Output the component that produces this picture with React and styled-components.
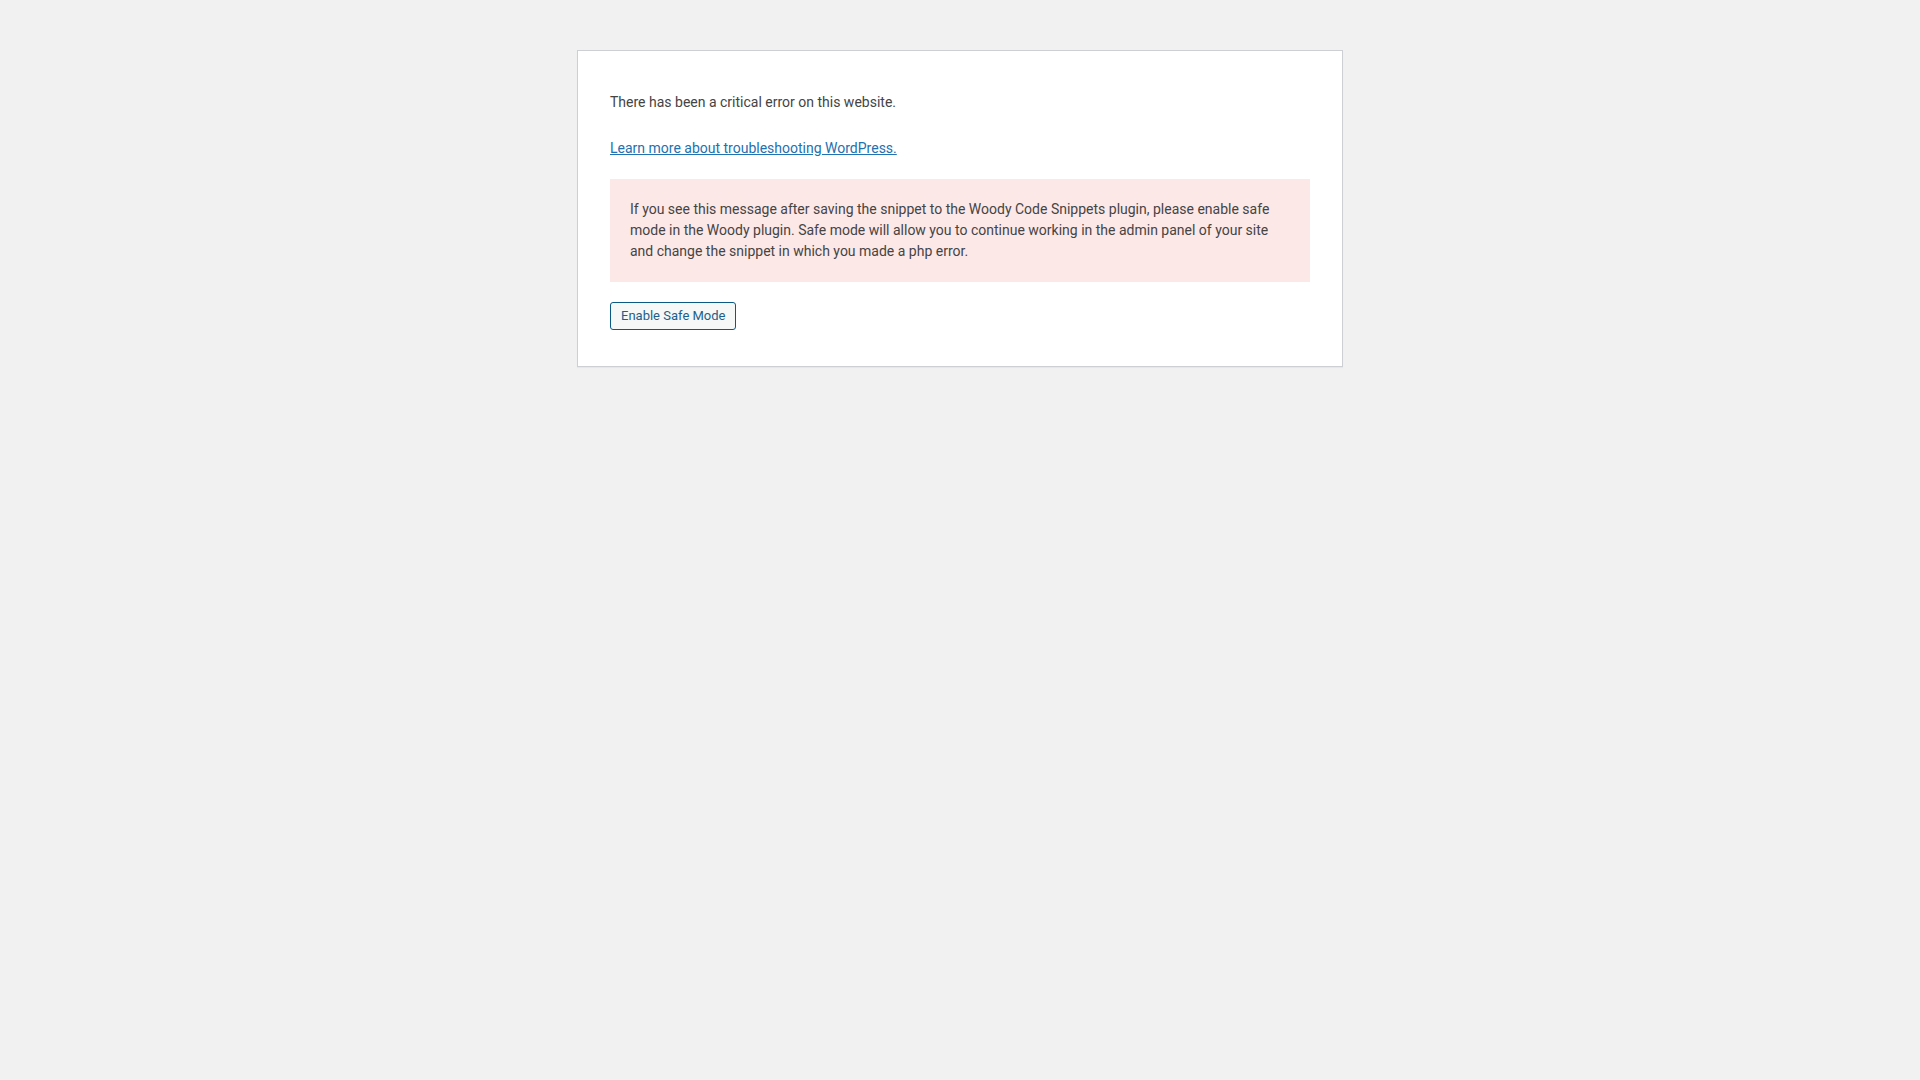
import styled, { createGlobalStyle } from 'styled-components'

const GlobalStyle = createGlobalStyle`
  html, body {
    margin: 0;
    padding: 0;
    background: #f1f1f1;
  }
  body {
    min-height: 100vh;
    font-family: Roboto, "Liberation Sans", sans-serif;
  }
`

const Page = styled.div`
  padding: 50px 0 32px;
`

const Card = styled.div`
  box-sizing: content-box;
  max-width: 700px;
  margin: 0 auto;
  padding: 16px 32px;
  background: #fff;
  border: 1px solid #ccd0d4;
  box-shadow: 0 1px 1px rgba(0, 0, 0, 0.04);
  color: #444;
  font-size: 14px;
  line-height: 1.5;
`

const Message = styled.p`
  margin: 25px 0 20px;
`

const HelpLink = styled.a`
  color: #2271b1;
  text-decoration: underline;
`

const Notice = styled.div`
  margin: 20px 0;
  padding: 20px;
  background: #fde8e8;
  color: #444;
`

const SafeButton = styled.button`
  display: inline-block;
  margin: 0 0 20px;
  padding: 0 10px;
  height: 28px;
  font-family: Roboto, "Liberation Sans", sans-serif;
  font-size: 13px;
  line-height: 26px;
  color: #1d5f8a;
  background: #f6f7f7;
  border: 1px solid #0a5a85;
  border-radius: 3px;
  cursor: pointer;
`

export default function App() {
  return (
    <>
      <GlobalStyle />
      <Page>
        <Card>
          <Message>There has been a critical error on this website.</Message>
          <Message>
            <HelpLink href="#">Learn more about troubleshooting WordPress.</HelpLink>
          </Message>
          <Notice>
            If you see this message after saving the snippet to the Woody Code Snippets plugin, please
            enable safe mode in the Woody plugin. Safe mode will allow you to continue working in the
            admin panel of your site and change the snippet in which you made a php error.
          </Notice>
          <SafeButton type="button">Enable Safe Mode</SafeButton>
        </Card>
      </Page>
    </>
  )
}
